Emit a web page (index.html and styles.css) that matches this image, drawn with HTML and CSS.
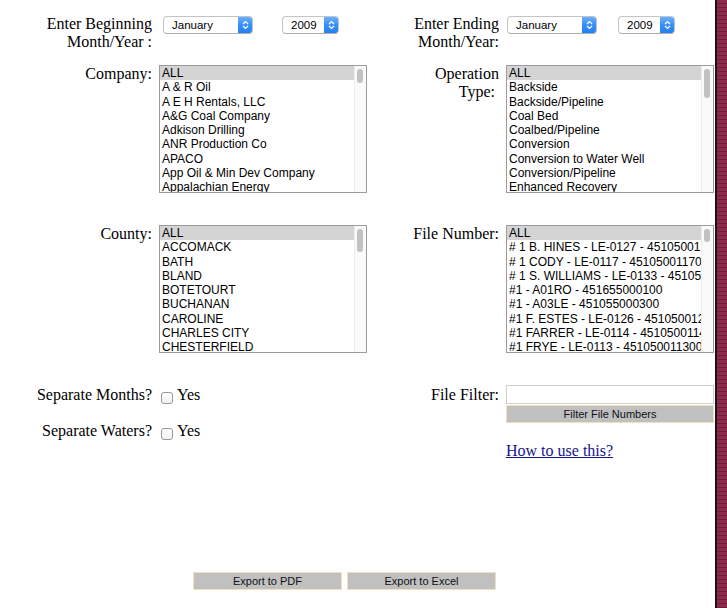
FILE: index.html
```html
<!DOCTYPE html>
<html>
<head>
<meta charset="utf-8">
<link rel="stylesheet" href="styles.css">
</head>
<body>
<div class="page">
  <div class="row row1">
    <div class="label">Enter Beginning<br>Month/Year :</div>
    <div class="selects left">
      <div class="sel month"><span>January</span><span class="arrow"><svg width="7" height="10" viewBox="0 0 7 10"><path d="M1 4 L3.5 1.5 L6 4 M1 6 L3.5 8.5 L6 6" fill="none" stroke="#fff" stroke-width="1.2"/></svg></span></div>
      <div class="sel year"><span>2009</span><span class="arrow"><svg width="7" height="10" viewBox="0 0 7 10"><path d="M1 4 L3.5 1.5 L6 4 M1 6 L3.5 8.5 L6 6" fill="none" stroke="#fff" stroke-width="1.2"/></svg></span></div>
    </div>
    <div class="label">Enter Ending<br>Month/Year:</div>
    <div class="selects right">
      <div class="sel month"><span>January</span><span class="arrow"><svg width="7" height="10" viewBox="0 0 7 10"><path d="M1 4 L3.5 1.5 L6 4 M1 6 L3.5 8.5 L6 6" fill="none" stroke="#fff" stroke-width="1.2"/></svg></span></div>
      <div class="sel year"><span>2009</span><span class="arrow"><svg width="7" height="10" viewBox="0 0 7 10"><path d="M1 4 L3.5 1.5 L6 4 M1 6 L3.5 8.5 L6 6" fill="none" stroke="#fff" stroke-width="1.2"/></svg></span></div>
    </div>
  </div>

  <div class="row row2">
    <div class="label">Company:</div>
    <div class="list">
      <div class="opts">
        <div class="opt on">ALL</div>
        <div class="opt">A &amp; R Oil</div>
        <div class="opt">A E H Rentals, LLC</div>
        <div class="opt">A&amp;G Coal Company</div>
        <div class="opt">Adkison Drilling</div>
        <div class="opt">ANR Production Co</div>
        <div class="opt">APACO</div>
        <div class="opt">App Oil &amp; Min Dev Company</div>
        <div class="opt">Appalachian Energy</div>
      </div>
      <div class="scroll"><div class="thumb t14"></div></div>
    </div>
    <div class="label">Operation<br>Type:&nbsp;</div>
    <div class="list">
      <div class="opts">
        <div class="opt on">ALL</div>
        <div class="opt">Backside</div>
        <div class="opt">Backside/Pipeline</div>
        <div class="opt">Coal Bed</div>
        <div class="opt">Coalbed/Pipeline</div>
        <div class="opt">Conversion</div>
        <div class="opt">Conversion to Water Well</div>
        <div class="opt">Conversion/Pipeline</div>
        <div class="opt">Enhanced Recovery</div>
      </div>
      <div class="scroll"><div class="thumb t29"></div></div>
    </div>
  </div>

  <div class="row row3">
    <div class="label">County:</div>
    <div class="list">
      <div class="opts">
        <div class="opt on">ALL</div>
        <div class="opt">ACCOMACK</div>
        <div class="opt">BATH</div>
        <div class="opt">BLAND</div>
        <div class="opt">BOTETOURT</div>
        <div class="opt">BUCHANAN</div>
        <div class="opt">CAROLINE</div>
        <div class="opt">CHARLES CITY</div>
        <div class="opt">CHESTERFIELD</div>
      </div>
      <div class="scroll"><div class="thumb t23"></div></div>
    </div>
    <div class="label">File Number:</div>
    <div class="list">
      <div class="opts">
        <div class="opt on">ALL</div>
        <div class="opt"># 1 B. HINES - LE-0127 - 451050012700</div>
        <div class="opt"># 1 CODY - LE-0117 - 451050011700</div>
        <div class="opt"># 1 S. WILLIAMS - LE-0133 - 451050013300</div>
        <div class="opt">#1 - A01RO - 451655000100</div>
        <div class="opt">#1 - A03LE - 451055000300</div>
        <div class="opt">#1 F. ESTES - LE-0126 - 451050012600</div>
        <div class="opt">#1 FARRER - LE-0114 - 451050011400</div>
        <div class="opt">#1 FRYE - LE-0113 - 451050011300</div>
      </div>
      <div class="scroll"><div class="thumb t13"></div></div>
    </div>
  </div>

  <div class="row row4">
    <div class="label shift">Separate Months?</div>
    <div class="check shift"><span class="cb"></span><span>Yes</span></div>
    <div class="label shift">File Filter:</div>
    <div class="filter">
      <div class="input"></div>
      <div class="btn wide">Filter File Numbers</div>
    </div>
  </div>

  <div class="row row5">
    <div class="label">Separate Waters?</div>
    <div class="check"><span class="cb"></span><span>Yes</span></div>
    <div></div>
    <div class="help"><a href="#">How to use this?</a></div>
  </div>

  <div class="exports">
    <div class="btn exp">Export to PDF</div>
    <div class="btn exp">Export to Excel</div>
  </div>
</div>
</body>
</html>
```

FILE: styles.css
```css
html {
  background: repeating-linear-gradient(180deg, #8e2b4c 0px, #8e2b4c 3px, #6f1d38 3px, #6f1d38 4px);
  min-height: 100%;
}
body {
  margin: 0;
  font-family: "Liberation Serif", "Times New Roman", serif;
  font-size: 16px;
  color: #000;
}
.page {
  width: 717px;
  min-height: 608px;
  box-sizing: border-box;
  background: #fff;
  border-right: 2px solid #161616;
  padding: 15px 0 0 8px;
}
.row {
  display: grid;
  grid-template-columns: 144px 208px 125px 208px;
  column-gap: 7px;
  align-items: start;
}
.label {
  text-align: right;
  line-height: 18px;
}
.row2 { margin-top: 14px; }
.row3 { margin-top: 32px; }
.row4 { margin-top: 31px; }
.row5 { margin-top: -1px; }
.shift { padding-top: 2px; }

/* popup selects */
.selects {
  display: flex;
  margin-top: 1px;
}
.selects.left { margin-left: 4px; gap: 29px; }
.selects.right { margin-left: 1px; gap: 21px; }
.sel {
  height: 18px;
  box-sizing: border-box;
  border: 1px solid #c4c4c4;
  border-bottom-color: #aeaeae;
  border-radius: 4px;
  background: #fff;
  display: flex;
  align-items: center;
  justify-content: space-between;
  font-family: "Liberation Sans", Arial, sans-serif;
  font-size: 11.5px;
  overflow: hidden;
}
.sel > span:first-child { padding-left: 8px; }
.sel.month { width: 90px; }
.sel.year { width: 57px; }
.arrow {
  width: 15px;
  height: 18px;
  margin: -1px -1px -1px 0;
  background: linear-gradient(180deg, #6db4fb 0%, #3a8ff7 50%, #1f7ef5 100%);
  border-radius: 0 4px 4px 0;
  display: flex;
  align-items: center;
  justify-content: center;
}

/* list boxes */
.list {
  height: 128px;
  box-sizing: border-box;
  border: 1px solid #9c9c9c;
  display: flex;
  background: #fff;
}
.opts {
  flex: 1;
  overflow: hidden;
  font-family: "Liberation Sans", Arial, sans-serif;
  font-size: 12px;
  line-height: 14.25px;
}
.opt {
  padding-left: 2px;
  white-space: nowrap;
  overflow: hidden;
}
.opt.on { background: #d4d4d4; }
.scroll {
  width: 11px;
  border-left: 1px solid #ececec;
  background: #fafafa;
  padding-top: 3px;
}
.thumb {
  width: 6px;
  margin-left: 2px;
  border-radius: 3px;
  background: #c2c2c2;
}
.t13 { height: 13px; }
.t14 { height: 14px; }
.t23 { height: 23px; }
.t29 { height: 29px; }

/* checkboxes */
.check {
  display: flex;
  align-items: flex-start;
  line-height: 18px;
}
.cb {
  width: 12px;
  height: 12px;
  box-sizing: border-box;
  margin: 6px 4px 0 2px;
  border: 1px solid #979797;
  border-radius: 3px;
  background: linear-gradient(180deg, #fff, #f1f1f1);
}

/* filter */
.filter { padding-top: 1px; }
.input {
  height: 19px;
  box-sizing: border-box;
  border: 1px solid #cfcfcf;
  background: #fff;
}
.btn {
  box-sizing: border-box;
  background: #c0c0c0;
  border: 1px solid #f2dfbf;
  font-family: "Liberation Sans", Arial, sans-serif;
  font-size: 11px;
  color: #111;
  text-align: center;
  height: 18px;
  line-height: 16px;
}
.wide { width: 208px; margin-top: 1px; }
.help {
  padding-top: 20px;
  line-height: 18px;
}
.help a { color: #14148c; }

.exports {
  display: flex;
  gap: 5px;
  margin-top: 112px;
  padding-left: 185px;
}
.exp { width: 149px; }
```
